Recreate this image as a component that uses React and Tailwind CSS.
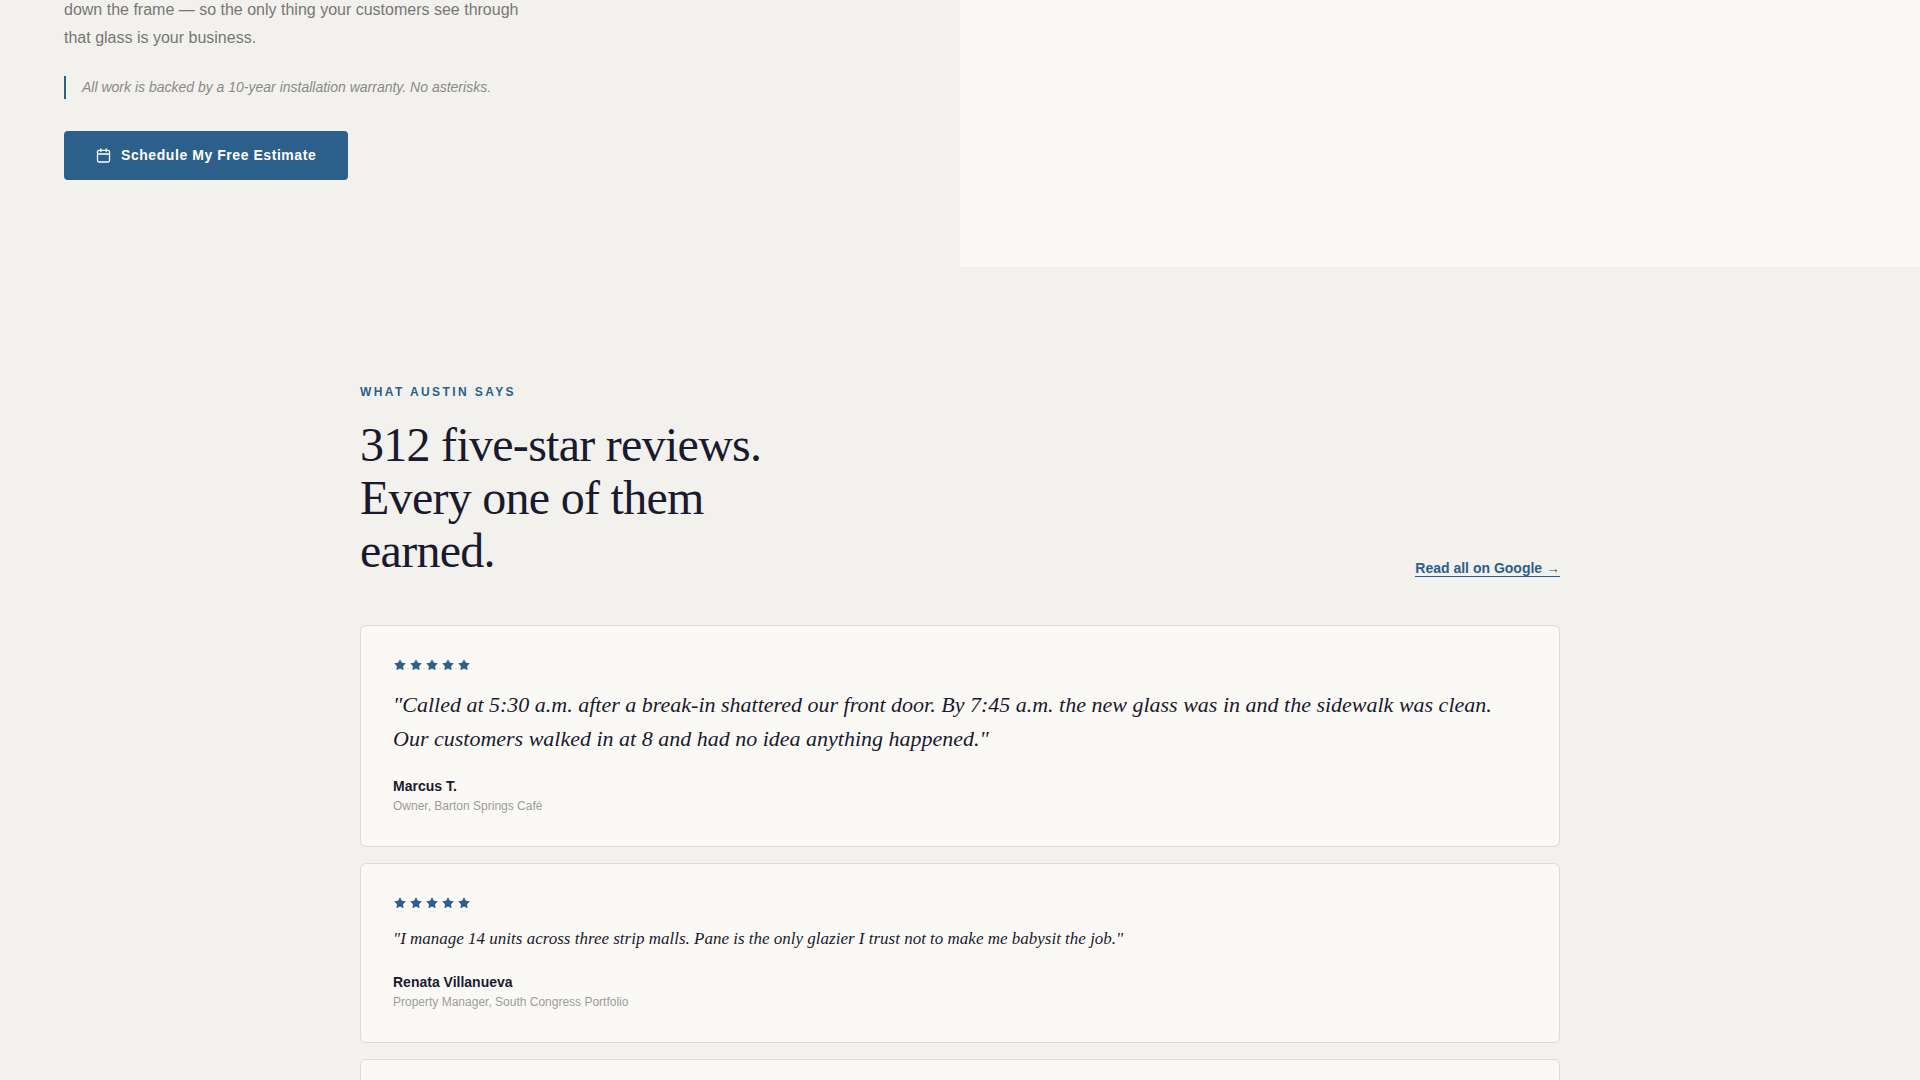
import React from "react";

const reviews = [
  {
    id: 1,
    quote:
      "Called at 5:30 a.m. after a break-in shattered our front door. By 7:45 a.m. the new glass was in and the sidewalk was clean. Our customers walked in at 8 and had no idea anything happened.",
    name: "Marcus T.",
    role: "Owner, Barton Springs Café",
    featured: true,
  },
  {
    id: 2,
    quote:
      "I manage 14 units across three strip malls. Pane is the only glazier I trust not to make me babysit the job.",
    name: "Renata Villanueva",
    role: "Property Manager, South Congress Portfolio",
  },
  { id: 3 },
];

const CalendarIcon = () => (
  <svg width="15" height="15" viewBox="0 0 15 15" fill="none" stroke="currentColor" strokeWidth="1.3" strokeLinecap="round" aria-hidden="true">
    <rect x="1.5" y="2.3" width="12" height="11.7" rx="1.5" />
    <path d="M1.5 6h12M4.8 1v2.6M10.2 1v2.6" />
  </svg>
);

const Stars = () => (
  <div className="flex gap-0.5 text-[#2c5f8a]" role="img" aria-label="5 out of 5 stars">
    {[1, 2, 3, 4, 5].map((n) => (
      <svg key={n} width="14" height="14" viewBox="0 0 14 14" fill="currentColor">
        <path d="M7 1.2l1.9 3.5 3.9.6-2.8 2.9.6 4.1L7 10.6l-3.6 1.7.6-4.1-2.8-2.9 3.9-.6z" />
      </svg>
    ))}
  </div>
);

const ReviewCard = ({ review }) => {
  const { quote, name, role, featured } = review;

  return (
    <article className="min-h-20 rounded-md border border-[#dddcd8] bg-[#faf9f5] p-8">
      <Stars />
      {quote && (
        <>
          <blockquote
            className={`mt-4 font-['Liberation_Serif',serif] italic ${
              featured ? "text-[22px] leading-[34px]" : "text-[17px] leading-[26px]"
            }`}
          >
            {`"${quote}"`}
          </blockquote>
          <p className="mt-[18px] text-sm leading-6 font-semibold">{name}</p>
          <p className="text-xs leading-4 text-[#9c9c9c]">{role}</p>
        </>
      )}
    </article>
  );
};

const Estimate = () => (
  <section className="-mt-1 grid grid-cols-2">
    <div className="px-16 pb-[87px]">
      <p className="max-w-[480px] text-base leading-7 text-[#777777]">
        down the frame — so the only thing your customers see through that glass is your business.
      </p>
      <p className="mt-6 border-l-2 border-[#2c5f8a] pl-4 text-sm leading-[23px] text-[#8a8a8a] italic">
        All work is backed by a 10-year installation warranty. No asterisks.
      </p>
      <button className="mt-8 flex items-center gap-2.5 rounded bg-[#2c5f8a] px-8 py-3.5 text-sm leading-[21px] font-semibold tracking-[0.04em] text-white">
        <CalendarIcon />
        Schedule My Free Estimate
      </button>
    </div>
    <div className="bg-[#faf9f5]" />
  </section>
);

const Reviews = () => (
  <section className="mx-auto max-w-[1200px] pt-[115px]">
    <div className="flex items-end justify-between">
      <div>
        <p className="text-xs leading-5 font-semibold tracking-[0.2em] text-[#2c5f8a] uppercase">What Austin says</p>
        <h2 className="mt-4 max-w-[480px] font-['Liberation_Serif',serif] text-5xl leading-[53px] tracking-[-0.015em]">
          312 five-star reviews. Every one of them earned.
        </h2>
      </div>
      <a href="#google-reviews" className="border-b border-[#2c5f8a] text-sm leading-4 font-semibold text-[#2c5f8a]">
        Read all on Google →
      </a>
    </div>
    <div className="mt-12 flex flex-col gap-4">
      {reviews.map((review) => (
        <ReviewCard key={review.id} review={review} />
      ))}
    </div>
  </section>
);

export default function App() {
  return (
    <main className="min-h-screen bg-[#f2f1ed] font-['Liberation_Sans',sans-serif] text-[#1a1a2e]">
      <Estimate />
      <Reviews />
    </main>
  );
}
